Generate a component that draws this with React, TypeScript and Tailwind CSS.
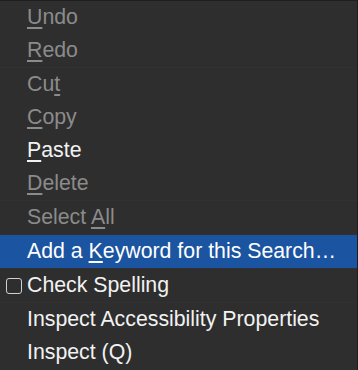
import React from "react";

type Item = { pre: string; acc: string; post: string; disabled?: boolean; highlight?: boolean; check?: boolean; sepAfter?: boolean };

const items: Item[] = [
  { pre: "", acc: "U", post: "ndo", disabled: true },
  { pre: "", acc: "R", post: "edo", disabled: true, sepAfter: true },
  { pre: "Cu", acc: "t", post: "", disabled: true },
  { pre: "", acc: "C", post: "opy", disabled: true },
  { pre: "", acc: "P", post: "aste" },
  { pre: "", acc: "D", post: "elete", disabled: true, sepAfter: true },
  { pre: "Select ", acc: "A", post: "ll", disabled: true, sepAfter: true },
  { pre: "Add a ", acc: "K", post: "eyword for this Search…", highlight: true, sepAfter: true },
  { pre: "Check Spelling", acc: "", post: "", check: true, sepAfter: true },
  { pre: "Inspect Accessibility Properties", acc: "", post: "" },
  { pre: "Inspect (Q)", acc: "", post: "" },
];

export default function App() {
  return (
    <div className="w-[358px] h-[370px] bg-[#2e2e2e] border-t border-r border-[#1e1e1e] overflow-hidden" style={{ fontFamily: "'Liberation Sans', Arial, sans-serif" }}>
      {items.map((it, i) => (
        <React.Fragment key={i}>
          <div
            className={`h-[33px] flex items-center text-[21.3px] leading-none ${it.highlight ? "bg-[#1b54a0] text-white" : it.disabled ? "text-[#8b8b8b]" : "text-[#f2f2f2]"}`}
          >
            <div className="w-[28px] flex items-center shrink-0 pl-[6px]">
              {it.check && <div className="w-[16px] h-[16px] border border-[#d0d0d0] rounded-[3px]" />}
            </div>
            <span className="whitespace-nowrap -ml-[1px]">
              {it.pre}
              {it.acc && <span className="underline underline-offset-[3px] decoration-[1.5px]">{it.acc}</span>}
              {it.post}
            </span>
          </div>
          {it.sepAfter && <div className="h-px bg-[#313131]" />}
        </React.Fragment>
      ))}
    </div>
  );
}
